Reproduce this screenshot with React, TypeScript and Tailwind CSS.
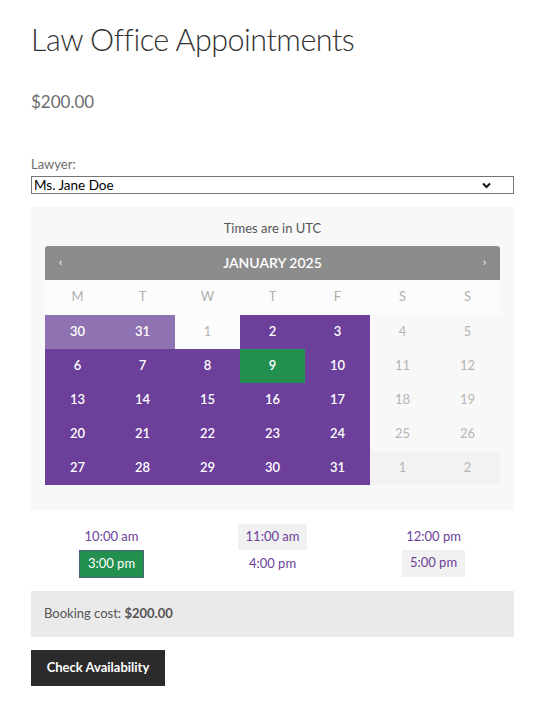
const purple = "bg-[#6b3f9a]";

type Cell = { d: number; kind: "prev" | "open" | "sel" | "past" | "wknd" | "next" };

const weeks: Cell[][] = [
  [
    { d: 30, kind: "prev" },
    { d: 31, kind: "prev" },
    { d: 1, kind: "past" },
    { d: 2, kind: "open" },
    { d: 3, kind: "open" },
    { d: 4, kind: "wknd" },
    { d: 5, kind: "wknd" },
  ],
  [6, 7, 8, 9, 10, 11, 12].map((d, i) => ({ d, kind: i > 4 ? "wknd" : d === 9 ? "sel" : "open" })),
  [13, 14, 15, 16, 17, 18, 19].map((d, i) => ({ d, kind: i > 4 ? "wknd" : "open" })),
  [20, 21, 22, 23, 24, 25, 26].map((d, i) => ({ d, kind: i > 4 ? "wknd" : "open" })),
  [
    ...[27, 28, 29, 30, 31].map((d) => ({ d, kind: "open" as const })),
    { d: 1, kind: "next" },
    { d: 2, kind: "next" },
  ],
];

const cellClass: Record<Cell["kind"], string> = {
  prev: "bg-[#8f72b2] text-white font-semibold",
  open: `${purple} text-white font-semibold`,
  sel: "bg-[#23904f] text-white font-semibold",
  past: "bg-[#fcfcfc] text-[#b5b5b5]",
  wknd: "text-[#b5b5b5]",
  next: "bg-[#f2f2f2] text-[#b5b5b5]",
};

const App: React.FC = () => {
  return (
    <div className="min-h-screen bg-white px-[31px] pt-[18px] font-['Lato',sans-serif] text-[13px]">
      <h1 className="text-[30.5px] font-light leading-[42px] tracking-[-0.5px] text-[#333]">
        Law Office Appointments
      </h1>
      <p className="mt-[29px] text-[17px] text-[#6d6d6d]">$200.00</p>

      <label className="block mt-[40px] text-[#6d6d6d]">Lawyer:</label>
      <div className="mt-[2px] flex h-[18px] items-center justify-between border border-[#767676] pl-[2px] pr-[22px] text-[13.5px] text-black">
        <span>Ms. Jane Doe</span>
        <svg width="9" height="7" viewBox="0 0 9 7">
          <path d="M1 1.5 L4.5 5 L8 1.5" fill="none" stroke="#111" strokeWidth="2" />
        </svg>
      </div>

      <div className="mt-[13px] bg-[#f8f8f8] px-[14px] pt-[12px] pb-[25px]">
        <p className="text-center text-[#555]">Times are in UTC</p>
        <div className="mt-[7px] flex h-[34px] items-center justify-between rounded-t-[3px] bg-[#8c8c8c] px-[14px] text-white">
          <span className="text-[11px]">‹</span>
          <span className="text-[14px] font-semibold">JANUARY 2025</span>
          <span className="text-[11px]">›</span>
        </div>
        <div className="grid grid-cols-7 bg-[#fcfcfc] h-[35px] items-center text-center text-[#b0b0b0]">
          {["M", "T", "W", "T", "F", "S", "S"].map((w, i) => (
            <span key={i}>{w}</span>
          ))}
        </div>
        <div className="grid grid-cols-7">
          {weeks.flat().map((c, i) => (
            <div key={i} className={`flex h-[34px] items-center justify-center ${cellClass[c.kind]}`}>
              {c.d}
            </div>
          ))}
        </div>
      </div>

      <div className="mt-[14px] grid grid-cols-3 justify-items-center text-[#6b3f9a]">
        <span className="flex h-[26px] items-center px-[8px]">10:00 am</span>
        <span className="flex h-[26px] items-center bg-[#f1f1f1] px-[8px]">11:00 am</span>
        <span className="flex h-[26px] items-center px-[8px]">12:00 pm</span>
        <span className="flex h-[28px] w-[65px] items-center justify-center border-[1.5px] border-dotted border-[#6b3f9a] bg-[#23904f] text-white">
          3:00 pm
        </span>
        <span className="flex h-[28px] items-center px-[8px]">4:00 pm</span>
        <span className="flex h-[27px] w-[63px] items-center justify-center bg-[#f1f1f1]">5:00 pm</span>
      </div>

      <div className="mt-[13px] flex h-[46px] items-center bg-[#eaeaea] px-[13px] text-[#555]">
        <span>
          Booking cost: <strong className="font-bold">$200.00</strong>
        </span>
      </div>

      <button className="mt-[13px] h-[36px] w-[134px] bg-[#2b2b2b] text-[13px] font-bold text-white">
        Check Availability
      </button>
    </div>
  );
};

export default App;
